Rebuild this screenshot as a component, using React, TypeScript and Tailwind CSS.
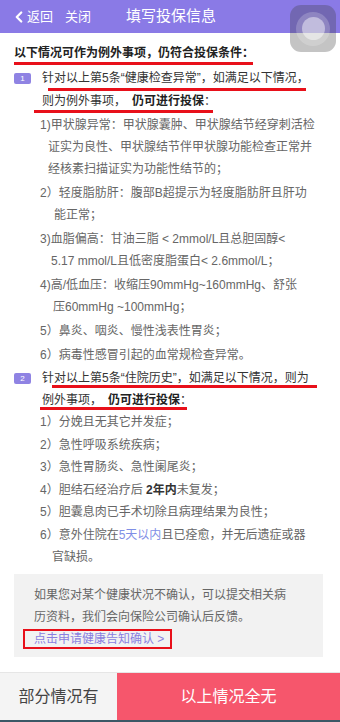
import { ChevronLeft } from 'lucide-react';

type Item = { lines: React.ReactNode[]; indent: string };

const s1Items: Item[] = [
  {
    lines: ['1)甲状腺异常：甲状腺囊肿、甲状腺结节经穿刺活检', '证实为良性、甲状腺结节伴甲状腺功能检查正常并', '经核素扫描证实为功能性结节的；'],
    indent: 'pl-[8px]',
  },
  { lines: ['2）轻度脂肪肝：腹部B超提示为轻度脂肪肝且肝功', '能正常；'], indent: 'pl-[14px]' },
  { lines: ['3)血脂偏高：甘油三脂 < 2mmol/L且总胆固醇<', '5.17 mmol/L且低密度脂蛋白< 2.6mmol/L；'], indent: 'pl-[11px]' },
  { lines: ['4)高/低血压：收缩压90mmHg~160mmHg、舒张', '压60mmHg ~100mmHg；'], indent: 'pl-[13px]' },
  { lines: ['5）鼻炎、咽炎、慢性浅表性胃炎；'], indent: '' },
  { lines: ['6）病毒性感冒引起的血常规检查异常。'], indent: '' },
];

const s2Items: Item[] = [
  { lines: ['1）分娩且无其它并发症；'], indent: '' },
  { lines: ['2）急性呼吸系统疾病；'], indent: '' },
  { lines: ['3）急性胃肠炎、急性阑尾炎；'], indent: '' },
  {
    lines: [
      <>
        4）胆结石经治疗后 <b className="font-bold text-[#333]">2年内</b>未复发；
      </>,
    ],
    indent: '',
  },
  { lines: ['5）胆囊息肉已手术切除且病理结果为良性；'], indent: '' },
  {
    lines: [
      <>
        6）意外住院在<span className="text-[#7f8fe6]">5天以内</span>且已痊愈，并无后遗症或器
      </>,
      '官缺损。',
    ],
    indent: 'pl-[12px]',
  },
];

function ItemList({ items, gap }: { items: Item[]; gap: string }) {
  return (
    <div className="text-[#666]">
      {items.map((item, i) => (
        <div key={i} className={i === 0 ? '' : gap}>
          {item.lines.map((line, j) => (
            <div key={j} className={`h-[22px] leading-[22px] whitespace-nowrap ${j > 0 ? item.indent : ''}`}>
              {line}
            </div>
          ))}
        </div>
      ))}
    </div>
  );
}

function Badge({ n }: { n: number }) {
  return (
    <div className="w-[28px] shrink-0">
      <div className="mt-[6px] flex h-[11px] w-[17px] items-center justify-center rounded-[2px] bg-[#8f83e3] text-[8px] leading-none text-white">
        {n}
      </div>
    </div>
  );
}

export default function App() {
  return (
    <div className="relative flex h-[722px] w-[340px] flex-col overflow-hidden bg-white font-['Liberation_Sans','Noto_Sans_CJK_SC',sans-serif] text-[12px]">
      {/* header */}
      <div className="flex h-[33px] shrink-0 items-center bg-[#8a7ae6] text-white">
        <ChevronLeft className="ml-[10px] h-[18px] w-[18px]" strokeWidth={3} />
        <span className="ml-[-1px] text-[13px]">返回</span>
        <span className="ml-[12px] text-[13px]">关闭</span>
        <span className="ml-[35px] text-[15px]">填写投保信息</span>
      </div>

      {/* floating assistive button */}
      <div className="absolute left-[290px] top-[5px] flex h-[47px] w-[46px] items-center justify-center rounded-[11px] bg-[#3c3c3c]/30">
        <div className="flex h-[34px] w-[34px] items-center justify-center rounded-full bg-white/20">
          <div className="h-[23px] w-[23px] rounded-full bg-white/45" />
        </div>
      </div>

      <div className="flex-1 px-[14px]">
        {/* title */}
        <div className="relative mt-[9px] h-[22px] leading-[22px] font-bold text-[#222]">
          以下情况可作为例外事项，仍符合投保条件：
          <div className="absolute left-0 top-[20px] h-[3px] w-[239px] bg-[#e8101a]" />
        </div>

        {/* section 1 */}
        <div className="mt-[3px] flex">
          <Badge n={1} />
          <div className="flex-1">
            <div className="relative h-[23px] leading-[22px] whitespace-nowrap text-[#333]">
              针对以上第5条“健康检查异常”，如满足以下情况，
              <div className="absolute left-[6px] top-[21px] h-[3px] w-[258px] bg-[#e8101a]" />
            </div>
            <div className="relative h-[22px] leading-[22px] whitespace-nowrap text-[#333]">
              则为例外事项，<b className="ml-[6px] font-bold text-[#222]">仍可进行投保</b>：
              <div className="absolute left-[-8px] top-[20px] h-[3px] w-[179px] bg-[#e8101a]" />
            </div>
            <div className="mt-[2px] ml-[-2px]">
              <ItemList items={s1Items} gap="mt-[2px]" />
            </div>
          </div>
        </div>

        {/* section 2 */}
        <div className="mt-[1px] flex">
          <Badge n={2} />
          <div className="flex-1">
            <div className="relative h-[22px] leading-[22px] whitespace-nowrap text-[#333]">
              针对以上第5条“住院历史”，如满足以下情况，则为
              <div className="absolute left-[10px] top-[18px] h-[3px] w-[265px] bg-[#e8101a]" />
            </div>
            <div className="relative h-[22px] leading-[22px] whitespace-nowrap text-[#333]">
              例外事项，<b className="ml-[6px] font-bold text-[#222]">仍可进行投保</b>：
              <div className="absolute left-[-2px] top-[18px] h-[3px] w-[147px] bg-[#e8101a]" />
            </div>
            <div className="ml-[-2px]">
              <ItemList items={s2Items} gap="mt-[0.5px]" />
            </div>
          </div>
        </div>

        {/* notice box */}
        <div className="mt-[6px] w-[309px] bg-[#f2f2f2] pb-[7px] pl-[20px] pt-[10px] text-[#666]">
          <div className="h-[22px] leading-[22px] whitespace-nowrap">如果您对某个健康状况不确认，可以提交相关病</div>
          <div className="h-[22px] leading-[22px] whitespace-nowrap">历资料，我们会向保险公司确认后反馈。</div>
          <div className="h-[22px] leading-[22px]">
            <span className="relative text-[#8a7fe0]">
              点击申请健康告知确认 &gt;
              <span className="absolute bottom-[-3px] left-[-11px] right-[-8px] top-[-3px] border-2 border-[#e8101a]" />
            </span>
          </div>
        </div>
      </div>

      {/* bottom bar */}
      <div className="flex h-[50px] shrink-0 border-b-2 border-t border-b-[#3b5866] border-t-[#e6e6e6] text-[16px]">
        <div className="flex w-[117px] items-center justify-center bg-[#f4f4f4] text-[#444]">部分情况有</div>
        <div className="flex flex-1 items-center justify-center bg-[#f6566c] text-white">以上情况全无</div>
      </div>
    </div>
  );
}
